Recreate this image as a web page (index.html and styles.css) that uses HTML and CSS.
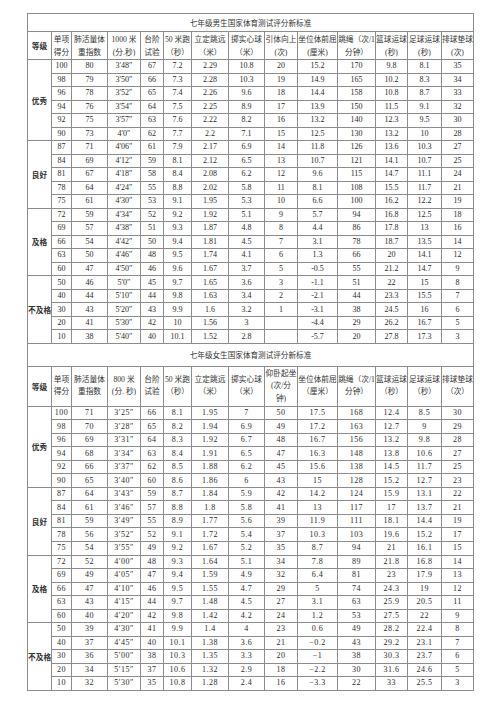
FILE: index.html
```html
<!DOCTYPE html>
<html lang="zh">
<head>
<meta charset="utf-8">
<title>七年级国家体育测试评分新标准</title>
<link rel="stylesheet" href="styles.css">
</head>
<body>
<table class="score">
<colgroup>
<col class="c-grade"><col class="c-pt"><col class="c-fvc"><col class="c-run"><col class="c-step"><col class="c-50"><col class="c-jump"><col class="c-ball"><col class="c-pull"><col class="c-sit"><col class="c-rope"><col class="c-bb"><col class="c-fb"><col class="c-vb">
</colgroup>
<tbody class="boys">
<tr class="title"><td colspan="14">七年级男生国家体育测试评分新标准</td></tr>
<tr class="head">
<td class="grade">等级</td><td>单项<br>得分</td><td>肺活量体<br>重指数</td><td>1000 米<br>(分.秒)</td><td>台阶<br>试验</td><td>50 米跑<br>（秒）</td><td>立定跳远<br>（米）</td><td>掷实心球<br>（米）</td><td>引体向上<br>(次)</td><td>坐位体前屈<br>(厘米)</td><td>跳绳（次/1<br>分钟）</td><td>篮球运球<br>(秒)</td><td>足球运球<br>(秒)</td><td>排球垫球<br>(次)</td>
</tr>
<tr><td class="grade" rowspan="6">优秀</td><td>100</td><td>80</td><td>3'48″</td><td>67</td><td>7.2</td><td>2.29</td><td>10.8</td><td>20</td><td>15.2</td><td>170</td><td>9.8</td><td>8.1</td><td>35</td></tr>
<tr><td>98</td><td>79</td><td>3'50″</td><td>66</td><td>7.3</td><td>2.28</td><td>10.3</td><td>19</td><td>14.9</td><td>165</td><td>10.2</td><td>8.3</td><td>34</td></tr>
<tr><td>96</td><td>78</td><td>3'52″</td><td>65</td><td>7.4</td><td>2.26</td><td>9.6</td><td>18</td><td>14.4</td><td>158</td><td>10.8</td><td>8.7</td><td>33</td></tr>
<tr><td>94</td><td>76</td><td>3'54″</td><td>64</td><td>7.5</td><td>2.25</td><td>8.9</td><td>17</td><td>13.9</td><td>150</td><td>11.5</td><td>9.1</td><td>32</td></tr>
<tr><td>92</td><td>75</td><td>3'57″</td><td>63</td><td>7.6</td><td>2.22</td><td>8.2</td><td>16</td><td>13.2</td><td>140</td><td>12.3</td><td>9.5</td><td>30</td></tr>
<tr><td>90</td><td>73</td><td>4'0″</td><td>62</td><td>7.7</td><td>2.2</td><td>7.1</td><td>15</td><td>12.5</td><td>130</td><td>13.2</td><td>10</td><td>28</td></tr>
<tr><td class="grade" rowspan="5">良好</td><td>87</td><td>71</td><td>4'06″</td><td>61</td><td>7.9</td><td>2.17</td><td>6.9</td><td>14</td><td>11.8</td><td>126</td><td>13.6</td><td>10.3</td><td>27</td></tr>
<tr><td>84</td><td>69</td><td>4'12″</td><td>59</td><td>8.1</td><td>2.12</td><td>6.5</td><td>13</td><td>10.7</td><td>121</td><td>14.1</td><td>10.7</td><td>25</td></tr>
<tr><td>81</td><td>67</td><td>4'18″</td><td>58</td><td>8.4</td><td>2.08</td><td>6.2</td><td>12</td><td>9.6</td><td>115</td><td>14.7</td><td>11.1</td><td>24</td></tr>
<tr><td>78</td><td>64</td><td>4'24″</td><td>55</td><td>8.8</td><td>2.02</td><td>5.8</td><td>11</td><td>8.1</td><td>108</td><td>15.5</td><td>11.7</td><td>21</td></tr>
<tr><td>75</td><td>61</td><td>4'30″</td><td>53</td><td>9.1</td><td>1.95</td><td>5.3</td><td>10</td><td>6.6</td><td>100</td><td>16.2</td><td>12.2</td><td>19</td></tr>
<tr><td class="grade" rowspan="5">及格</td><td>72</td><td>59</td><td>4'34″</td><td>52</td><td>9.2</td><td>1.92</td><td>5.1</td><td>9</td><td>5.7</td><td>94</td><td>16.8</td><td>12.5</td><td>18</td></tr>
<tr><td>69</td><td>57</td><td>4'38″</td><td>51</td><td>9.3</td><td>1.87</td><td>4.8</td><td>8</td><td>4.4</td><td>86</td><td>17.8</td><td>13</td><td>16</td></tr>
<tr><td>66</td><td>54</td><td>4'42″</td><td>50</td><td>9.4</td><td>1.81</td><td>4.5</td><td>7</td><td>3.1</td><td>78</td><td>18.7</td><td>13.5</td><td>14</td></tr>
<tr><td>63</td><td>50</td><td>4'46″</td><td>48</td><td>9.5</td><td>1.74</td><td>4.1</td><td>6</td><td>1.3</td><td>66</td><td>20</td><td>14.1</td><td>12</td></tr>
<tr><td>60</td><td>47</td><td>4'50″</td><td>46</td><td>9.6</td><td>1.67</td><td>3.7</td><td>5</td><td>-0.5</td><td>55</td><td>21.2</td><td>14.7</td><td>9</td></tr>
<tr><td class="grade" rowspan="5">不及格</td><td>50</td><td>46</td><td>5'0″</td><td>45</td><td>9.7</td><td>1.65</td><td>3.6</td><td>3</td><td>-1.1</td><td>51</td><td>22</td><td>15</td><td>8</td></tr>
<tr><td>40</td><td>44</td><td>5'10″</td><td>44</td><td>9.8</td><td>1.63</td><td>3.4</td><td>2</td><td>-2.1</td><td>44</td><td>23.3</td><td>15.5</td><td>7</td></tr>
<tr><td>30</td><td>43</td><td>5'20″</td><td>43</td><td>9.9</td><td>1.6</td><td>3.2</td><td>1</td><td>-3.1</td><td>38</td><td>24.5</td><td>16</td><td>6</td></tr>
<tr><td>20</td><td>41</td><td>5'30″</td><td>42</td><td>10</td><td>1.56</td><td>3</td><td></td><td>-4.4</td><td>29</td><td>26.2</td><td>16.7</td><td>5</td></tr>
<tr><td>10</td><td>38</td><td>5'40″</td><td>40</td><td>10.1</td><td>1.52</td><td>2.8</td><td></td><td>-5.7</td><td>20</td><td>27.8</td><td>17.3</td><td>3</td></tr>
</tbody>
<tbody class="girls">
<tr class="title title2"><td colspan="14">七年级女生国家体育测试评分新标准</td></tr>
<tr class="head head2">
<td class="grade">等级</td><td>单项<br>得分</td><td>肺活量体<br>重指数</td><td>800 米<br>(分. 秒)</td><td>台阶<br>试验</td><td>50 米跑<br>（秒）</td><td>立定跳远<br>（米）</td><td>掷实心球<br>（米）</td><td>仰卧起坐<br>(次/分<br>钟)</td><td>坐位体前屈<br>（厘米）</td><td>跳绳（次/1<br>分钟）</td><td>篮球运球<br>（秒）</td><td>足球运球<br>（秒）</td><td>排球垫球<br>（次）</td>
</tr>
<tr><td class="grade" rowspan="6">优秀</td><td>100</td><td>71</td><td>3′25″</td><td>66</td><td>8.1</td><td>1.95</td><td>7</td><td>50</td><td>17.5</td><td>168</td><td>12.4</td><td>8.5</td><td>30</td></tr>
<tr><td>98</td><td>70</td><td>3′28″</td><td>65</td><td>8.2</td><td>1.94</td><td>6.9</td><td>49</td><td>17.2</td><td>163</td><td>12.7</td><td>9</td><td>29</td></tr>
<tr><td>96</td><td>69</td><td>3′31″</td><td>64</td><td>8.3</td><td>1.92</td><td>6.7</td><td>48</td><td>16.7</td><td>156</td><td>13.2</td><td>9.8</td><td>28</td></tr>
<tr><td>94</td><td>68</td><td>3′34″</td><td>63</td><td>8.4</td><td>1.91</td><td>6.5</td><td>47</td><td>16.3</td><td>148</td><td>13.8</td><td>10.6</td><td>27</td></tr>
<tr><td>92</td><td>66</td><td>3′37″</td><td>62</td><td>8.5</td><td>1.88</td><td>6.2</td><td>45</td><td>15.6</td><td>138</td><td>14.5</td><td>11.7</td><td>25</td></tr>
<tr><td>90</td><td>65</td><td>3′40″</td><td>60</td><td>8.6</td><td>1.86</td><td>6</td><td>43</td><td>15</td><td>128</td><td>15.2</td><td>12.7</td><td>23</td></tr>
<tr><td class="grade" rowspan="5">良好</td><td>87</td><td>64</td><td>3′43″</td><td>59</td><td>8.7</td><td>1.84</td><td>5.9</td><td>42</td><td>14.2</td><td>124</td><td>15.9</td><td>13.1</td><td>22</td></tr>
<tr><td>84</td><td>61</td><td>3′46″</td><td>57</td><td>8.8</td><td>1.8</td><td>5.8</td><td>41</td><td>13</td><td>117</td><td>17</td><td>13.7</td><td>21</td></tr>
<tr><td>81</td><td>59</td><td>3′49″</td><td>55</td><td>8.9</td><td>1.77</td><td>5.6</td><td>39</td><td>11.9</td><td>111</td><td>18.1</td><td>14.4</td><td>19</td></tr>
<tr><td>78</td><td>56</td><td>3′52″</td><td>52</td><td>9.1</td><td>1.72</td><td>5.4</td><td>37</td><td>10.3</td><td>103</td><td>19.6</td><td>15.2</td><td>17</td></tr>
<tr><td>75</td><td>54</td><td>3′55″</td><td>49</td><td>9.2</td><td>1.67</td><td>5.2</td><td>35</td><td>8.7</td><td>94</td><td>21</td><td>16.1</td><td>15</td></tr>
<tr><td class="grade" rowspan="5">及格</td><td>72</td><td>52</td><td>4′00″</td><td>48</td><td>9.3</td><td>1.64</td><td>5.1</td><td>34</td><td>7.8</td><td>89</td><td>21.8</td><td>16.8</td><td>14</td></tr>
<tr><td>69</td><td>49</td><td>4′05″</td><td>47</td><td>9.4</td><td>1.59</td><td>4.9</td><td>32</td><td>6.4</td><td>81</td><td>23</td><td>17.9</td><td>13</td></tr>
<tr><td>66</td><td>47</td><td>4′10″</td><td>46</td><td>9.5</td><td>1.55</td><td>4.7</td><td>29</td><td>5</td><td>74</td><td>24.3</td><td>19</td><td>12</td></tr>
<tr><td>63</td><td>43</td><td>4′15″</td><td>44</td><td>9.7</td><td>1.48</td><td>4.5</td><td>27</td><td>3.1</td><td>63</td><td>25.9</td><td>20.5</td><td>11</td></tr>
<tr><td>60</td><td>40</td><td>4′20″</td><td>42</td><td>9.8</td><td>1.42</td><td>4.2</td><td>24</td><td>1.2</td><td>53</td><td>27.5</td><td>22</td><td>9</td></tr>
<tr><td class="grade" rowspan="5">不及格</td><td>50</td><td>39</td><td>4′30″</td><td>41</td><td>9.9</td><td>1.4</td><td>4</td><td>23</td><td>0.6</td><td>49</td><td>28.2</td><td>22.4</td><td>8</td></tr>
<tr><td>40</td><td>37</td><td>4′45″</td><td>40</td><td>10.1</td><td>1.38</td><td>3.6</td><td>21</td><td>−0.2</td><td>43</td><td>29.2</td><td>23.1</td><td>7</td></tr>
<tr><td>30</td><td>36</td><td>5′00″</td><td>38</td><td>10.3</td><td>1.35</td><td>3.3</td><td>20</td><td>−1</td><td>38</td><td>30.3</td><td>23.7</td><td>6</td></tr>
<tr><td>20</td><td>34</td><td>5′15″</td><td>37</td><td>10.6</td><td>1.32</td><td>2.9</td><td>18</td><td>−2.2</td><td>30</td><td>31.6</td><td>24.6</td><td>5</td></tr>
<tr><td>10</td><td>32</td><td>5′30″</td><td>35</td><td>10.8</td><td>1.28</td><td>2.4</td><td>16</td><td>−3.3</td><td>22</td><td>33</td><td>25.5</td><td>3</td></tr>
</tbody>
</table>
</body>
</html>
```

FILE: styles.css
```css
html, body {
  margin: 0;
  padding: 0;
  background: #ffffff;
}

body {
  padding: 13px 0 0 27px;
  font-family: "Liberation Serif", "Noto Sans CJK SC", serif;
  color: #2b2b2b;
}

.score {
  border-collapse: collapse;
  table-layout: fixed;
  width: 446px;
  font-size: 8px;
  border: 1px solid #6f6f6f;
}

.c-grade { width: 24px; }
.c-pt { width: 20px; }
.c-fvc { width: 36px; }
.c-run { width: 33px; }
.c-step { width: 23px; }
.c-50 { width: 28px; }
.c-jump { width: 37px; }
.c-ball { width: 36px; }
.c-pull { width: 33px; }
.c-sit { width: 40px; }
.c-rope { width: 38px; }
.c-bb { width: 32px; }
.c-fb { width: 34px; }
.c-vb { width: 32px; }

.score tr {
  height: 13.52px;
}

.score td {
  border: 1px solid #8c8c8c;
  padding: 0;
  text-align: center;
  vertical-align: middle;
  white-space: nowrap;
  overflow: hidden;
  line-height: 8px;
}

.score tr.title {
  height: 18px;
}

.score tr.title2 {
  height: 23px;
}

.score .title td {
  font-family: "Noto Sans CJK SC", sans-serif;
  font-size: 7.6px;
  line-height: 9px;
  color: #333333;
}

.score tr.head {
  height: 28px;
}

.score tr.head2 {
  height: 40px;
}

.score .head td {
  line-height: 13px;
  font-family: "Liberation Serif", "Noto Sans CJK SC", serif;
  font-size: 7.7px;
  color: #333333;
}

.score .head2 td {
  line-height: 12.5px;
}

.score td.grade {
  font-family: "Noto Sans CJK SC", sans-serif;
  font-weight: 700;
  font-size: 7.7px;
  line-height: 9px;
  color: #333333;
}

.girls td {
  letter-spacing: 0.5px;
}

.girls .title td,
.girls .head td,
.girls td.grade {
  letter-spacing: 0;
}
```
